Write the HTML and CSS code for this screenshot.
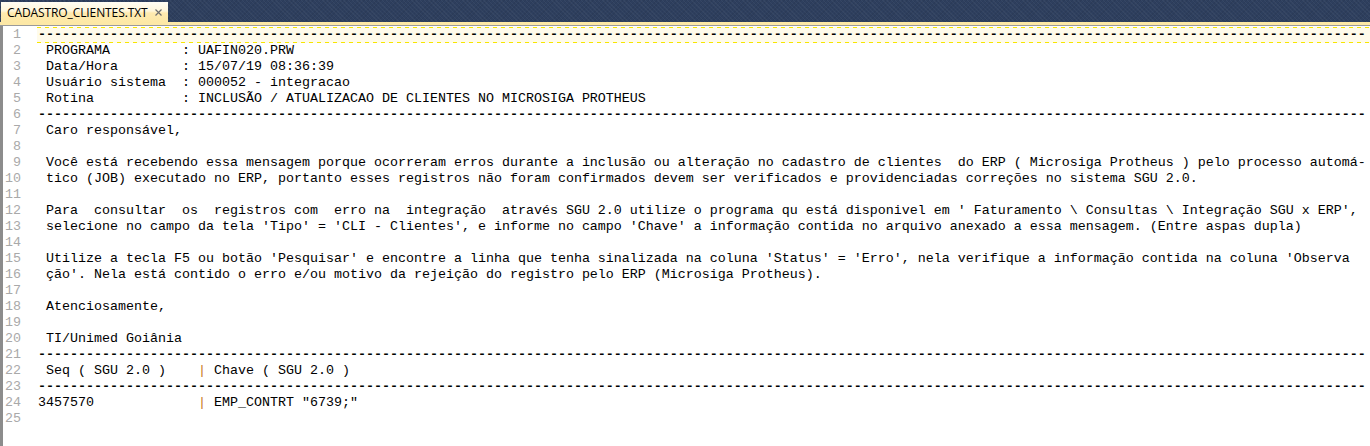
FILE: index.html
```html
<!DOCTYPE html>
<html>
<head>
<meta charset="utf-8">
<link rel="stylesheet" href="styles.css">
</head>
<body>
<div class="window">
  <div class="tabbar">
    <div class="tab">
      <span class="tab-title">CADASTRO_CLIENTES.TXT</span>
      <svg class="tab-close" width="7" height="7" viewBox="0 0 7 7"><path d="M0.5 0.5 L6.5 6.5 M6.5 0.5 L0.5 6.5" stroke="#6f6f6f" stroke-width="1.2"/></svg>
    </div>
  </div>
  <div class="strip"></div>
  <div class="editor">
    <div class="row current"><span class="ln">1</span><span class="code rule">----------------------------------------------------------------------------------------------------------------------------------------------------------------------</span></div>
    <div class="row"><span class="ln">2</span><span class="code"> PROGRAMA         : UAFIN020.PRW</span></div>
    <div class="row"><span class="ln">3</span><span class="code"> Data/Hora        : 15/07/19 08:36:39</span></div>
    <div class="row"><span class="ln">4</span><span class="code"> Usuário sistema  : 000052 - integracao</span></div>
    <div class="row"><span class="ln">5</span><span class="code"> Rotina           : INCLUSÃO / ATUALIZACAO DE CLIENTES NO MICROSIGA PROTHEUS</span></div>
    <div class="row"><span class="ln">6</span><span class="code rule">----------------------------------------------------------------------------------------------------------------------------------------------------------------------</span></div>
    <div class="row"><span class="ln">7</span><span class="code"> Caro responsável,</span></div>
    <div class="row"><span class="ln">8</span><span class="code"></span></div>
    <div class="row"><span class="ln">9</span><span class="code"> Você está recebendo essa mensagem porque ocorreram erros durante a inclusão ou alteração no cadastro de clientes  do ERP ( Microsiga Protheus ) pelo processo automá-</span></div>
    <div class="row"><span class="ln">10</span><span class="code"> tico (JOB) executado no ERP, portanto esses registros não foram confirmados devem ser verificados e providenciadas correções no sistema SGU 2.0.</span></div>
    <div class="row"><span class="ln">11</span><span class="code"></span></div>
    <div class="row"><span class="ln">12</span><span class="code"> Para  consultar  os  registros com  erro na  integração  através SGU 2.0 utilize o programa qu está disponivel em ' Faturamento \ Consultas \ Integração SGU x ERP',</span></div>
    <div class="row"><span class="ln">13</span><span class="code"> selecione no campo da tela 'Tipo' = 'CLI - Clientes', e informe no campo 'Chave' a informação contida no arquivo anexado a essa mensagem. (Entre aspas dupla)</span></div>
    <div class="row"><span class="ln">14</span><span class="code"></span></div>
    <div class="row"><span class="ln">15</span><span class="code"> Utilize a tecla F5 ou botão 'Pesquisar' e encontre a linha que tenha sinalizada na coluna 'Status' = 'Erro', nela verifique a informação contida na coluna 'Observa</span></div>
    <div class="row"><span class="ln">16</span><span class="code"> ção'. Nela está contido o erro e/ou motivo da rejeição do registro pelo ERP (Microsiga Protheus).</span></div>
    <div class="row"><span class="ln">17</span><span class="code"></span></div>
    <div class="row"><span class="ln">18</span><span class="code"> Atenciosamente,</span></div>
    <div class="row"><span class="ln">19</span><span class="code"></span></div>
    <div class="row"><span class="ln">20</span><span class="code"> TI/Unimed Goiânia</span></div>
    <div class="row"><span class="ln">21</span><span class="code rule">----------------------------------------------------------------------------------------------------------------------------------------------------------------------</span></div>
    <div class="row"><span class="ln">22</span><span class="code"> Seq ( SGU 2.0 )    <span class="op">|</span> Chave ( SGU 2.0 )</span></div>
    <div class="row"><span class="ln">23</span><span class="code rule">----------------------------------------------------------------------------------------------------------------------------------------------------------------------</span></div>
    <div class="row"><span class="ln">24</span><span class="code">3457570             <span class="op">|</span> EMP_CONTRT "6739;"</span></div>
    <div class="row"><span class="ln">25</span><span class="code"></span></div>
  </div>
</div>
</body>
</html>
```
FILE: styles.css
```css
html, body {
  margin: 0;
  padding: 0;
  background: #ffffff;
}
.window {
  width: 1370px;
  height: 446px;
  overflow: hidden;
  display: flex;
  flex-direction: column;
}
.tabbar {
  height: 22px;
  flex: none;
  background-color: #2e3f5e;
  background-image:
    repeating-linear-gradient(45deg, rgba(255,255,255,0.04) 0 1px, transparent 1px 3px),
    repeating-linear-gradient(-45deg, rgba(0,0,0,0.06) 0 1px, transparent 1px 3px);
  display: flex;
  align-items: flex-end;
  padding-left: 1px;
}
.tab {
  width: 167px;
  height: 20px;
  box-sizing: border-box;
  background: linear-gradient(#fffdf4 0%, #fff6da 45%, #ffeab0 55%, #fde8a6 100%);
  display: flex;
  align-items: center;
  padding-left: 6px;
  padding-right: 6px;
}
.tab-title {
  font-family: "Open Sans", "Noto Sans", sans-serif;
  font-size: 12px;
  color: #000;
  flex: 1;
  letter-spacing: -0.1px;
}
.tab-close {
  display: block;
}
.strip {
  height: 3px;
  flex: none;
  background: #fde8a6;
  border-bottom: 1px solid #9a9a9a;
}
.editor {
  flex: 1;
  border-left: 3px solid #8c8c8c;
  padding-top: 1px;
  font-family: "Liberation Mono", "Courier New", monospace;
  font-size: 13.333px;
  line-height: 16px;
  color: #000;
}
.row {
  display: flex;
  height: 16px;
}
.ln {
  width: 18px;
  flex: none;
  text-align: right;
  color: #a9a9a9;
  padding-right: 16px;
}
.code {
  flex: 1;
  white-space: pre;
  overflow: hidden;
  padding-left: 1px;
}
.code.rule {
  font-weight: bold;
}
.row.current .code {
  background-color: #fffbea;
  background-image:
    repeating-linear-gradient(90deg, #f7e600 0 4px, transparent 4px 8px),
    repeating-linear-gradient(90deg, #f7e600 0 4px, transparent 4px 8px);
  background-size: 100% 1px, 100% 1px;
  background-position: 0 0, 0 15px;
  background-repeat: no-repeat;
}
.op {
  color: #c8781e;
}
```
